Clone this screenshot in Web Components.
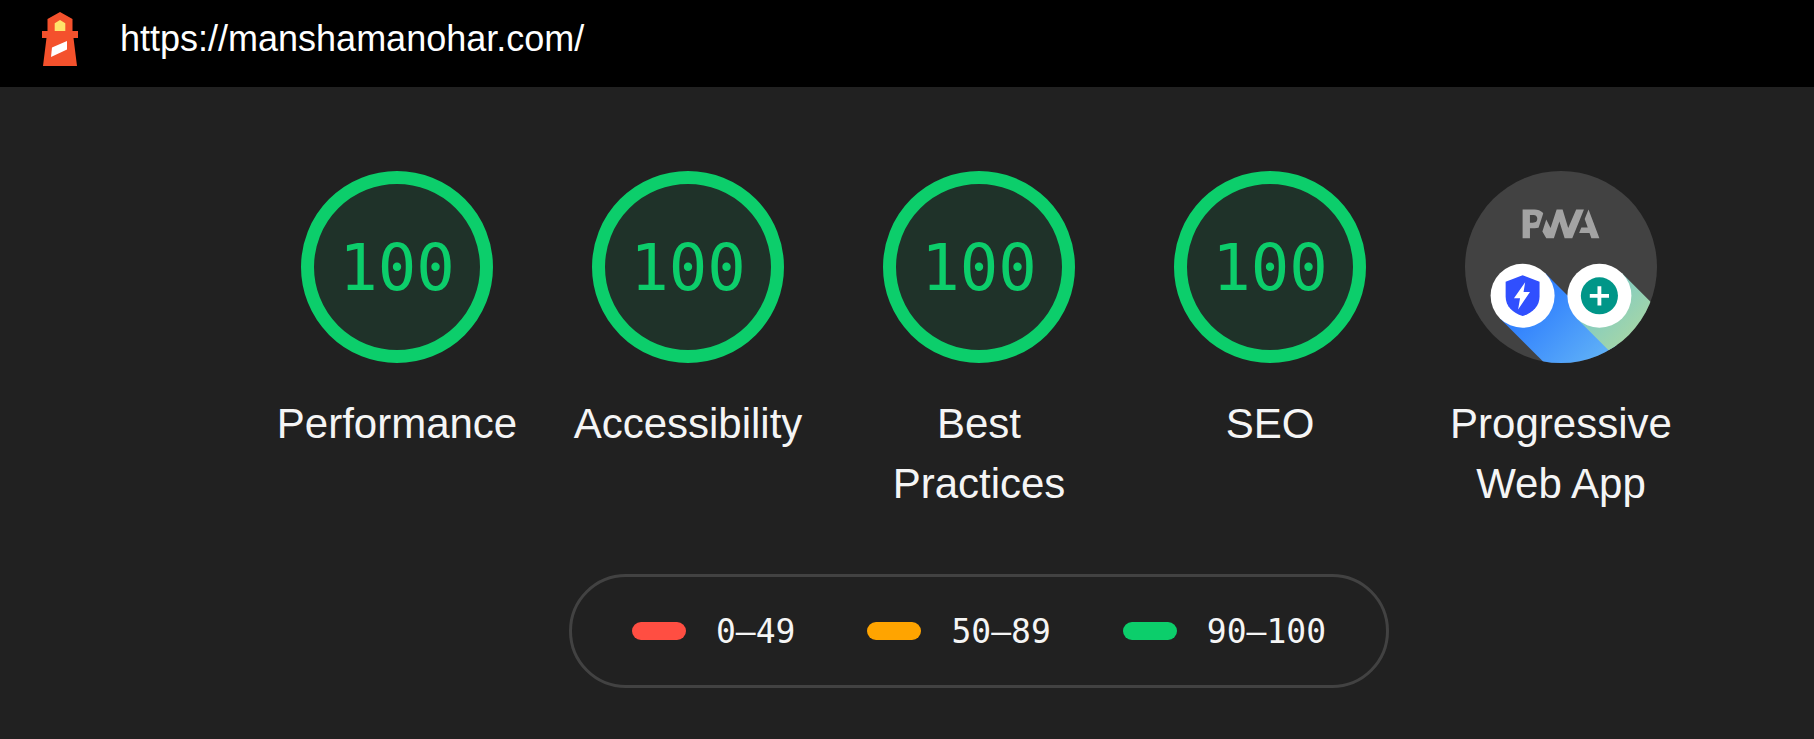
<!DOCTYPE html>
<html lang="en">
<head>
<meta charset="utf-8">
<meta name="viewport" content="width=device-width, initial-scale=1">
<title>Lighthouse report</title>
<style>
  html, body {
    margin: 0;
    min-height: 100%;
    background: #212121;
  }
  body {
    color: #f5f5f5;
    font-family: "Liberation Sans", Arial, sans-serif;
    --mono: "DejaVu Sans Mono", monospace;
    --pass: #0cce6b;
    --average: #ffa400;
    --fail: #ff4e42;
  }
</style>
</head>
<body>

<report-topbar href="https://manshamanohar.com/">https://manshamanohar.com/</report-topbar>
<report-scores>
  <score-gauge score="100" target="#performance">Performance</score-gauge>
  <score-gauge score="100" target="#accessibility">Accessibility</score-gauge>
  <score-gauge score="100" target="#best-practices">Best Practices</score-gauge>
  <score-gauge score="100" target="#seo">SEO</score-gauge>
  <pwa-gauge target="#pwa">Progressive Web App</pwa-gauge>
  <score-scale slot="scale">
    <scale-range level="fail">0–49</scale-range>
    <scale-range level="average">50–89</scale-range>
    <scale-range level="pass">90–100</scale-range>
  </score-scale>
</report-scores>

<script>
// Black bar with the logo and the tested url
class ReportTopbar extends HTMLElement {
  connectedCallback() {
    this.attachShadow({mode: 'open'});
    this.shadowRoot.innerHTML = `
      <style>
        :host {
          display: flex;
          align-items: center;
          gap: 42px;
          height: 87px;
          padding: 0 42px 9px;
          box-sizing: border-box;
          background: #000;
        }
        svg {
          flex: none;
          width: 36px;
          height: 54px;
        }
        a {
          color: #fff;
          font-size: 36px;
          line-height: 42px;
          text-decoration: none;
        }
      </style>
      <svg viewBox="0 0 36 54" aria-hidden="true">
        <path fill="#f4512c" d="M18 0l12.5 7v12H36v7h-4.500L35 54H1l3.500-28H0v-7h5.500V7z"/>
        <path fill="#ffe36b" d="M18 8l5.300 3.300V19H12.700v-7.700z"/>
        <path fill="#fff" d="M10 35.500L25 29v8.500L9 45z"/>
      </svg>
      <a href="${this.getAttribute('href')}"><slot></slot></a>
    `;
  }
}

// Row of gauges with the scale under it
class ReportScores extends HTMLElement {
  constructor() {
    super();
    this.attachShadow({mode: 'open'});
    this.shadowRoot.innerHTML = `
      <style>
        :host {
          display: flex;
          flex-direction: column;
          align-items: center;
          gap: 60px;
          padding: 84px 0 48px 144px;
        }
        .gauges {
          display: flex;
          flex-wrap: wrap;
          justify-content: center;
        }
      </style>
      <div class="gauges"><slot></slot></div>
      <slot name="scale"></slot>
    `;
  }
}

// Shared box and label for both kinds of gauge
const gaugeStyle = `
  :host {
    display: block;
    width: 291px;
    padding: 0 24px;
    box-sizing: border-box;
  }
  a {
    display: flex;
    flex-direction: column;
    align-items: center;
    gap: 31px;
    color: inherit;
    text-decoration: none;
  }
  .label {
    font-size: 42px;
    line-height: 60px;
    text-align: center;
  }
`;

class ScoreGauge extends HTMLElement {
  connectedCallback() {
    this.attachShadow({mode: 'open'});
    this.shadowRoot.innerHTML = `
      <style>
        ${gaugeStyle}
        .ring {
          display: grid;
          place-items: center;
          width: 192px;
          height: 192px;
          padding-top: 2px;
          box-sizing: border-box;
          border: 13px solid var(--pass);
          border-radius: 50%;
          background: #1f3229;
          color: var(--pass);
          font: 64px/72px var(--mono);
        }
      </style>
      <a href="${this.getAttribute('target')}">
        <div class="ring">${this.getAttribute('score')}</div>
        <div class="label"><slot></slot></div>
      </a>
    `;
  }
}

class PwaGauge extends HTMLElement {
  connectedCallback() {
    this.attachShadow({mode: 'open'});
    this.shadowRoot.innerHTML = `
      <style>
        ${gaugeStyle}
        svg {
          width: 192px;
          height: 192px;
        }
      </style>
      <a href="${this.getAttribute('target')}">
        <svg viewBox="0 0 60 60" aria-hidden="true">
          <defs>
            <clipPath id="disc"><circle cx="30" cy="30" r="30"/></clipPath>
            <linearGradient id="blue" gradientUnits="userSpaceOnUse" x1="18" y1="39" x2="42" y2="63">
              <stop offset="0" stop-color="#2979ff"/>
              <stop offset="1" stop-color="#64b5f6"/>
            </linearGradient>
            <linearGradient id="green" gradientUnits="userSpaceOnUse" x1="42" y1="39" x2="54" y2="51">
              <stop offset="0" stop-color="#80cbc4"/>
              <stop offset="1" stop-color="#a5d6a7"/>
            </linearGradient>
          </defs>
          <circle cx="30" cy="30" r="30" fill="#424242"/>
          <g clip-path="url(#disc)">
            <path fill="url(#blue)" d="M10.93 46.07l14.14-14.14 40 40-14.14 14.14z"/>
            <path fill="url(#green)" d="M34.93 46.07l14.14-14.14 40 40-14.14 14.14z"/>
          </g>
          <g fill="#a3a3a3">
            <path d="M35.66 19.39l.7-1.75h2L37.4 15 38.6 12l3.4 9h-2.51l-.58-1.61z"/>
            <path d="M33.52 21l3.65-9h-2.42l-2.5 5.82L30.5 12h-1.86l-1.9 5.82-1.35-2.65-1.21 3.72L25.4 21h2.38l1.72-5.2 1.64 5.2z"/>
            <path fill-rule="evenodd" d="M20.3 17.91h1.48c.45 0 .85-.05 1.2-.15l.39-1.18 1.07-3.3a2.64 2.64 0 0 0-.28-.37c-.55-.6-1.36-.91-2.42-.91H18v9h2.3zm1.96-3.84c.22.22.33.5.33.87 0 .36-.1.65-.29.87-.2.23-.59.35-1.15.35h-.86v-2.41h.87c.52 0 .89.1 1.1.32z"/>
          </g>
          <circle cx="18" cy="39" r="10" fill="#fff"/>
          <path fill="#304ffe" d="M18 32.6l5.3 2v4.6c0 3-2.2 5.2-5.3 6.1-3.1-.9-5.3-3.1-5.3-6.1v-4.6z"/>
          <path fill="#fff" d="M18.8 34.8l-3.500 5h1.900l-.6 3.500 3.700-5.500h-2z"/>
          <circle cx="42" cy="39" r="10" fill="#fff"/>
          <circle cx="42" cy="39" r="5.8" fill="#009688"/>
          <path fill="#fff" d="M41.4 36h1.200v2.400H45v1.200h-2.400V42h-1.200v-2.400H39v-1.200h2.400z"/>
        </svg>
        <div class="label"><slot></slot></div>
      </a>
    `;
  }
}

class ScoreScale extends HTMLElement {
  constructor() {
    super();
    this.attachShadow({mode: 'open'});
    this.shadowRoot.innerHTML = `
      <style>
        :host {
          display: flex;
          gap: 72px;
          padding: 33px 60px;
          border: 3px solid #424242;
          border-radius: 57px;
        }
      </style>
      <slot></slot>
    `;
  }
}

// Coloured pill and its range of scores
class ScaleRange extends HTMLElement {
  connectedCallback() {
    this.attachShadow({mode: 'open'});
    this.shadowRoot.innerHTML = `
      <style>
        :host {
          display: flex;
          align-items: center;
          gap: 30px;
          font: 33px/40px var(--mono);
        }
        .pill {
          width: 54px;
          height: 18px;
          border-radius: 9px;
          background: var(--${this.getAttribute('level')});
        }
        .range {
          padding-top: 2px;
        }
      </style>
      <span class="pill"></span>
      <span class="range"><slot></slot></span>
    `;
  }
}

customElements.define('report-topbar', ReportTopbar);
customElements.define('report-scores', ReportScores);
customElements.define('score-gauge', ScoreGauge);
customElements.define('pwa-gauge', PwaGauge);
customElements.define('score-scale', ScoreScale);
customElements.define('scale-range', ScaleRange);
</script>
</body>
</html>
